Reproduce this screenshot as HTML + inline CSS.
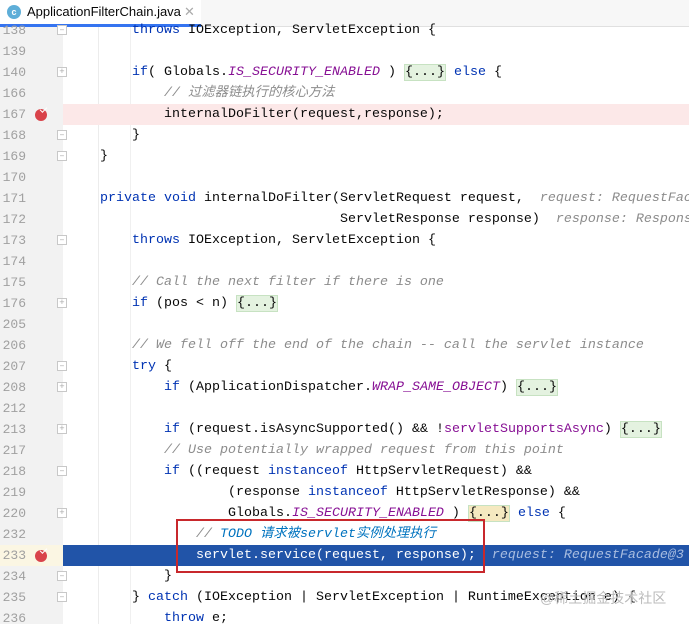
<!DOCTYPE html><html><head><meta charset="utf-8"><style>
*{margin:0;padding:0;box-sizing:border-box}
body{width:689px;height:624px;overflow:hidden;background:#fff;position:relative;font-family:"Liberation Mono","Noto Sans CJK SC",monospace;font-size:13.33px;color:#080808}
.tabbar{position:absolute;left:0;top:0;width:689px;height:27px;background:#f7f7f7;border-bottom:1px solid #e0e0e0}
.tab{position:absolute;left:0;top:0;width:201px;height:27px;background:#fff;border-bottom:3px solid #3574f0;font-family:"Liberation Sans",sans-serif;font-size:13px;line-height:24px;padding-left:27px}
.ic{position:absolute;left:7px;top:5px;width:14px;height:14px;border-radius:50%;background:#5eaed8;color:#fff;font-size:9px;line-height:14px;text-align:center;font-weight:bold}
.x{position:absolute;left:184px;top:0;color:#aaa;font-size:13px}
.gut{position:absolute;left:0;top:27px;width:63px;height:597px;background:#f2f2f2}
.vl{position:absolute;top:27px;height:597px;width:1px;background:#ececec}
.row{position:absolute;left:0;width:689px;height:21px;line-height:21px;white-space:pre;overflow:hidden}
.n{position:absolute;left:0;width:26px;text-align:right;color:#a0a0a0;font-family:"Liberation Mono",monospace;font-size:13px}
.c{position:absolute;left:100px}
.k{color:#0033b3}.cm{color:#8c8c8c;font-style:italic}.s{color:#871094;font-style:italic}
.h{color:#8c8c8c;font-style:italic}
.f{background:#e4f2e0;border:1px solid #c7e2c2}
.td{color:#0073bf;font-style:italic}
.fold{position:absolute;left:57px;top:5px;width:10px;height:10px;border:1px solid #c8c8c8;background:#fff;font-size:9px;line-height:8px;text-align:center;color:#aaa}
.bp{position:absolute;left:35px;top:5px;width:12px;height:12px;border-radius:50%;background:#d9434a}
.bp:after{content:"";position:absolute;left:5px;top:-2px;width:6px;height:3px;border-left:1.5px solid #fff;border-bottom:1.5px solid #fff;transform:rotate(-45deg)}
</style></head><body>
<div class="tabbar"><div class="tab"><span class="ic">c</span>ApplicationFilterChain.java<span class="x">✕</span></div></div>
<div class="gut"></div>
<div class="vl" style="left:98px"></div>
<div class="vl" style="left:130px;background:#f0f0f0"></div>

<div class="row" style="top:20px"><span class="n">138</span><span class="fold">–</span><span class="c">    <span class="k">throws</span> IOException, ServletException {</span></div>
<div class="row" style="top:41px"><span class="n">139</span></div>
<div class="row" style="top:62px"><span class="n">140</span><span class="fold">+</span><span class="c">    <span class="k">if</span>( Globals.<span class="s">IS_SECURITY_ENABLED</span> ) <span class="f">{...}</span> <span class="k">else</span> {</span></div>
<div class="row" style="top:83px"><span class="n">166</span><span class="c">        <span class="cm">// 过滤器链执行的核心方法</span></span></div>
<div class="row" style="top:104px;background:#fce8e8;left:63px;width:626px"></div>
<div class="row" style="top:104px"><span class="n">167</span><span class="bp"></span><span class="c">        internalDoFilter(request,response);</span></div>
<div class="row" style="top:125px"><span class="n">168</span><span class="fold">–</span><span class="c">    }</span></div>
<div class="row" style="top:146px"><span class="n">169</span><span class="fold">–</span><span class="c">}</span></div>
<div class="row" style="top:167px"><span class="n">170</span></div>
<div class="row" style="top:188px"><span class="n">171</span><span class="c"><span class="k">private void</span> internalDoFilter(ServletRequest request,  <span class="h">request: RequestFacade@3</span></span></div>
<div class="row" style="top:209px"><span class="n">172</span><span class="c">                              ServletResponse response)  <span class="h">response: ResponseFacade</span></span></div>
<div class="row" style="top:230px"><span class="n">173</span><span class="fold">–</span><span class="c">    <span class="k">throws</span> IOException, ServletException {</span></div>
<div class="row" style="top:251px"><span class="n">174</span></div>
<div class="row" style="top:272px"><span class="n">175</span><span class="c">    <span class="cm">// Call the next filter if there is one</span></span></div>
<div class="row" style="top:293px"><span class="n">176</span><span class="fold">+</span><span class="c">    <span class="k">if</span> (pos &lt; n) <span class="f">{...}</span></span></div>
<div class="row" style="top:314px"><span class="n">205</span></div>
<div class="row" style="top:335px"><span class="n">206</span><span class="c">    <span class="cm">// We fell off the end of the chain -- call the servlet instance</span></span></div>
<div class="row" style="top:356px"><span class="n">207</span><span class="fold">–</span><span class="c">    <span class="k">try</span> {</span></div>
<div class="row" style="top:377px"><span class="n">208</span><span class="fold">+</span><span class="c">        <span class="k">if</span> (ApplicationDispatcher.<span class="s">WRAP_SAME_OBJECT</span>) <span class="f">{...}</span></span></div>
<div class="row" style="top:398px"><span class="n">212</span></div>
<div class="row" style="top:419px"><span class="n">213</span><span class="fold">+</span><span class="c">        <span class="k">if</span> (request.isAsyncSupported() &amp;&amp; !<span style="color:#871094">servletSupportsAsync</span>) <span class="f">{...}</span></span></div>
<div class="row" style="top:440px"><span class="n">217</span><span class="c">        <span class="cm">// Use potentially wrapped request from this point</span></span></div>
<div class="row" style="top:461px"><span class="n">218</span><span class="fold">–</span><span class="c">        <span class="k">if</span> ((request <span class="k">instanceof</span> HttpServletRequest) &amp;&amp;</span></div>
<div class="row" style="top:482px"><span class="n">219</span><span class="c">                (response <span class="k">instanceof</span> HttpServletResponse) &amp;&amp;</span></div>
<div class="row" style="top:503px"><span class="n">220</span><span class="fold">+</span><span class="c">                Globals.<span class="s">IS_SECURITY_ENABLED</span> ) <span class="f" style="background:#f5e9c0">{...}</span> <span class="k">else</span> {</span></div>
<div class="row" style="top:524px"><span class="n">232</span><span class="c">            <span class="cm">// </span><span class="td">TODO 请求被servlet实例处理执行</span></span></div>
<div class="row" style="top:545px;background:#2154a8;left:63px;width:626px"></div>
<div class="row" style="top:545px;background:#fbf6e3;width:63px"></div>
<div class="row" style="top:545px"><span class="n">233</span><span class="bp"></span><span class="c" style="color:#fff">            servlet.service(request, response);  <span style="color:#a8bde0;font-style:italic">request: RequestFacade@3</span></span></div>
<div class="row" style="top:566px"><span class="n">234</span><span class="fold">–</span><span class="c">        }</span></div>
<div class="row" style="top:587px"><span class="n">235</span><span class="fold">–</span><span class="c">    } <span class="k">catch</span> (IOException | ServletException | RuntimeException e) {</span></div>
<div class="row" style="top:608px"><span class="n">236</span><span class="c">        <span class="k">throw</span> e;</span></div>
<div style="position:absolute;left:176px;top:519px;width:309px;height:54px;border:2px solid #c8282c"></div>
<div style="position:absolute;left:540px;top:588px;color:#bbb;font-family:'Liberation Sans','Noto Sans CJK SC',sans-serif;font-size:14px">@稀土掘金技术社区</div>
</body></html>
